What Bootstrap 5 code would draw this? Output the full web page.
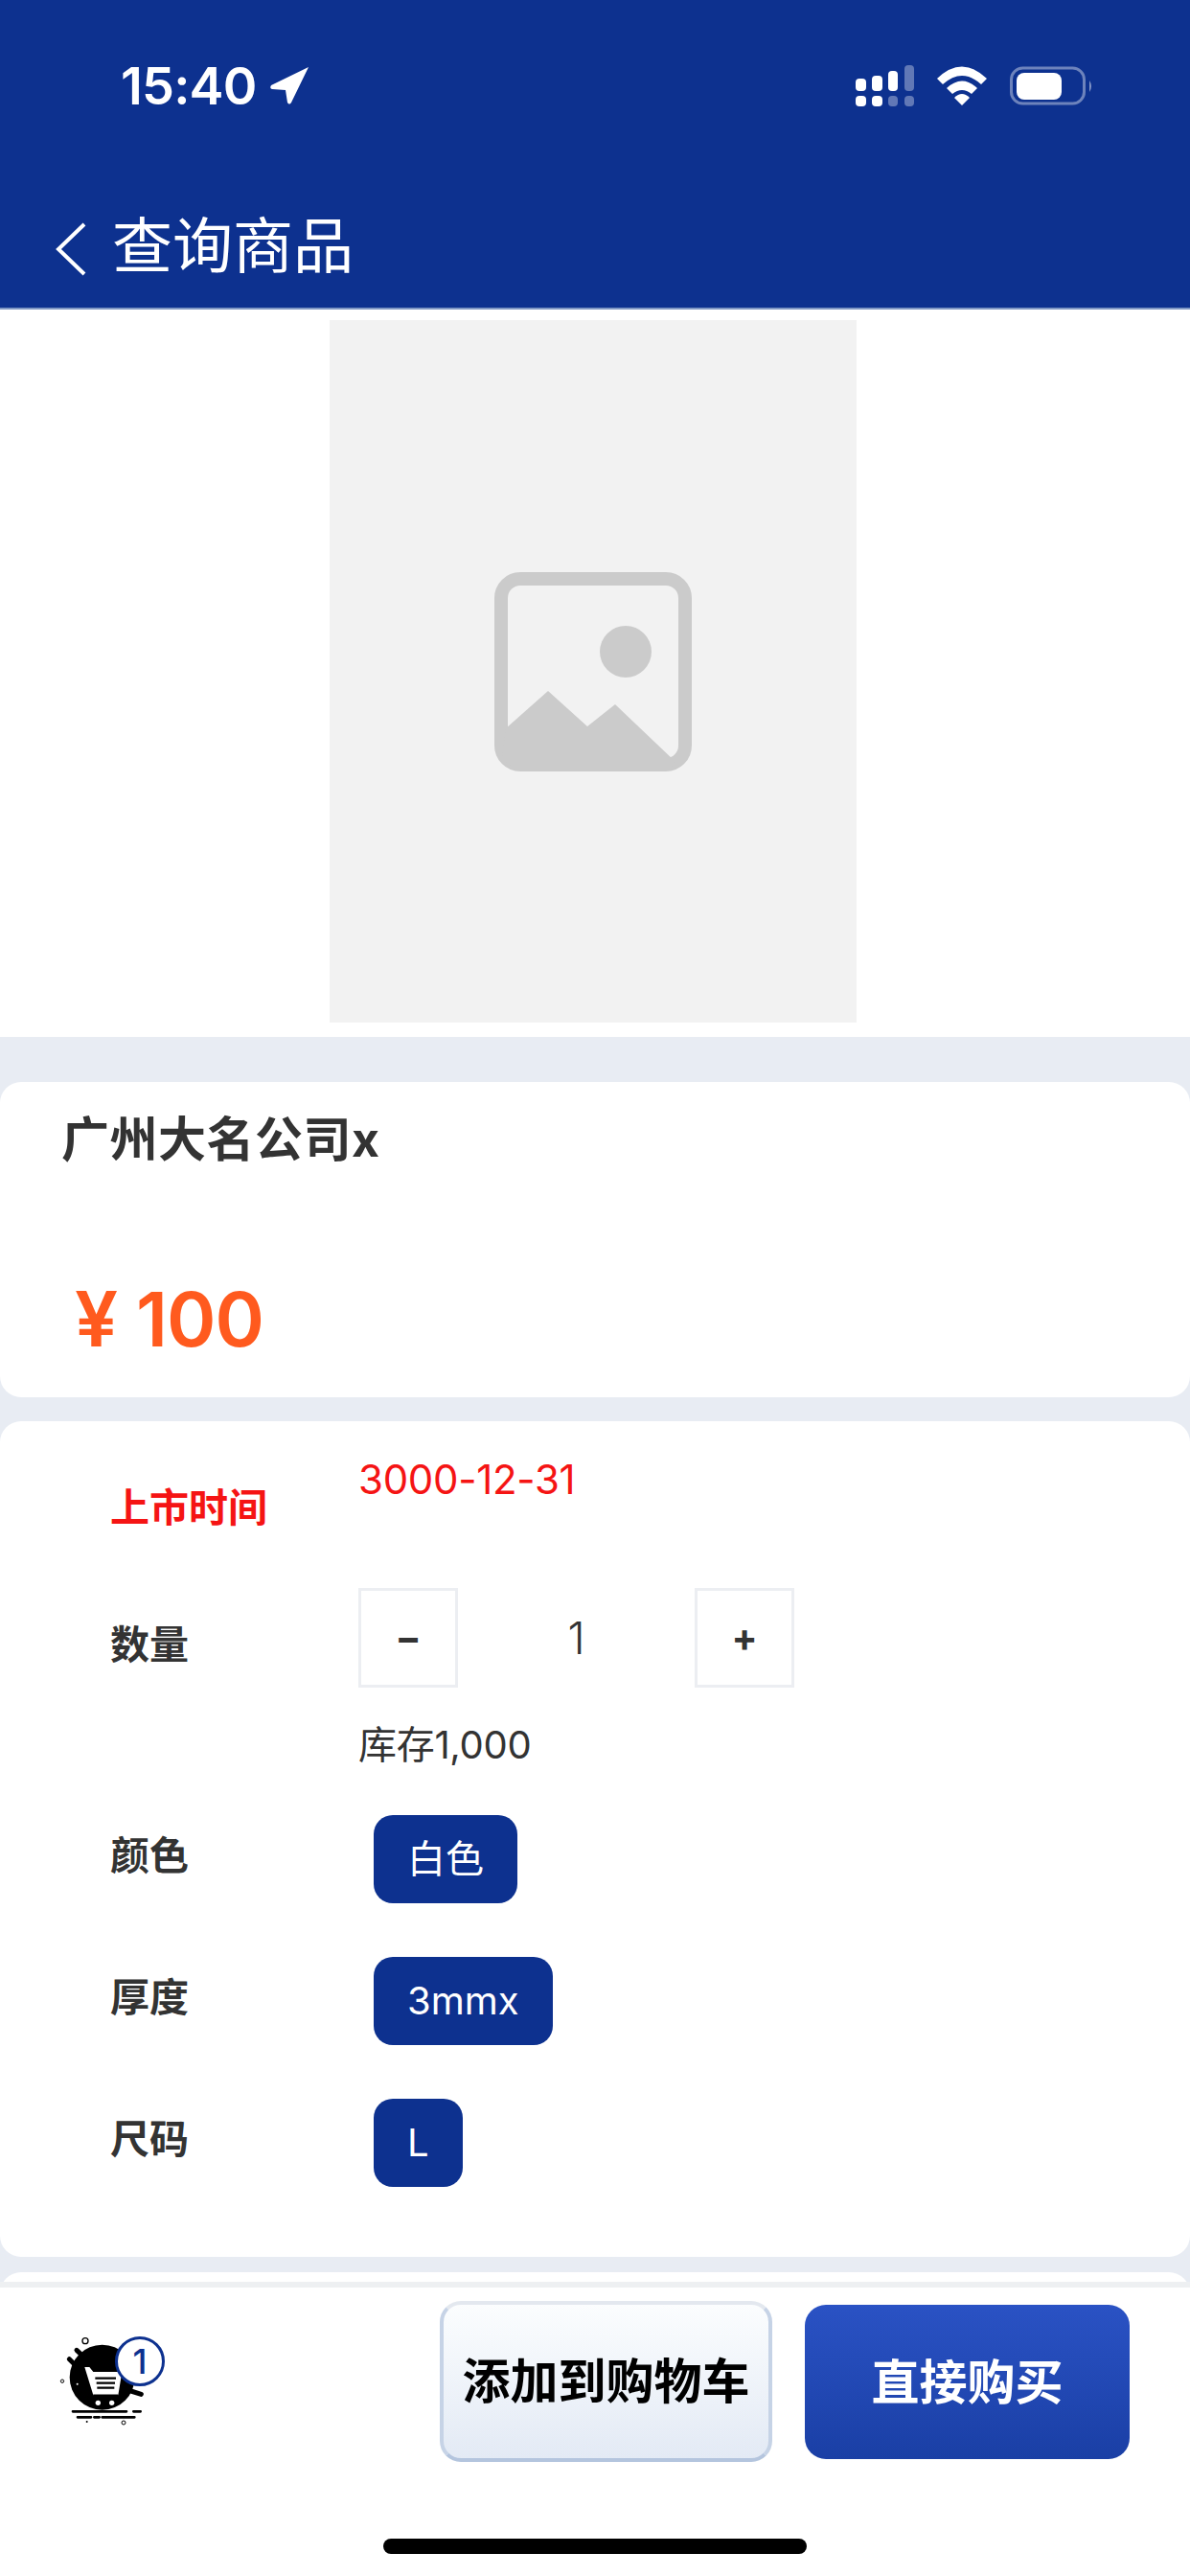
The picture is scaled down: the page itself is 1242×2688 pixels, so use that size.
<!DOCTYPE html>
<html lang="zh-CN">
<head>
<meta charset="utf-8">
<title>查询商品</title>
<link rel="stylesheet" href="https://cdn.jsdelivr.net/npm/bootstrap@5.3.0/dist/css/bootstrap.min.css">
<style>
html,body{margin:0;background:#fff}
body{font-family:Inter,"Noto Sans CJK SC",sans-serif;color:#333;width:1242px;height:2688px;overflow:hidden}
.app-shell{height:2688px}
.app-head{background:#0d318f;height:323px;border-bottom:2px solid #7f97c4;color:#fff}
.status-row{height:197px;padding:62px 0 0 126px}
.clock{font-size:54px;line-height:56px;font-weight:600;letter-spacing:-.8px;width:155px}
.status-icons{margin-left:539px;margin-top:-12px}
.title-row{height:116px;padding-left:57px}
.back-mark{margin-top:10px}
.page-title{font-size:63px;line-height:80px;margin-left:26px;margin-top:2px;font-weight:400}
.scroll-area{background:#e8ecf3;height:2058px;overflow:hidden}
.pic-wrap{background:#fff;height:759px;padding-top:11px}
.pic-box{width:550px;height:733px;background:#f2f2f2;margin-right:4px}
.panel{background:#fff;border-radius:22px}
.panel-title{height:329px;margin-top:47px;padding:30px 0 0 64px}
.goods-name{font-size:50px;line-height:60px;font-weight:700;color:#333;letter-spacing:.5px}
.goods-price{color:#ff5a1e;margin-top:110px;padding-left:14px;line-height:94px;font-weight:600}
.yen{font-size:80px;margin-right:19px}
.amount{font-size:78px;letter-spacing:-1px}
.panel-spec{margin-top:25px;height:872px}
.label-col{width:374px;padding-left:115px;font-size:41px;line-height:50px;font-weight:700;flex:none}
.red-text{color:#f51414}
.date-val{font-size:42px;line-height:50px;margin-top:36px;color:#f51414;letter-spacing:-.3px}
.first-row{height:174px}
.first-row .label-col{margin-top:65px}
.stepper-label{margin-top:34px}
.step-btn{width:104px;height:104px;border:3px solid #eceef2;background:#fff;color:#333;font-size:40px;font-weight:700;padding:0;border-radius:0;line-height:1}
.qty-val{width:247px;text-align:center;font-size:46px;line-height:80px;font-weight:300;color:#333}
.stock-row{padding-left:374px;margin-top:35px;font-size:40px;line-height:50px;font-weight:400;letter-spacing:-.3px}
.opt-row{margin-top:56px}
.opt-row.first-opt{margin-top:48px}
.opt-row .label-col{margin-top:17px}
.chip-btn{margin-left:16px;height:92px;background:#0d318f;color:#fff;border:0;border-radius:20px;font-size:40px;font-weight:400;line-height:92px;padding:0 35px}
.panel-stub{margin-top:16px;height:30px;border-radius:22px 22px 0 0}
.app-foot{height:307px;background:#fff;border-top:6px solid #eef0f2;position:relative}
.cart-wrap{width:160px;height:130px;margin:33px 259px 0 40px;position:relative;flex:none}
.cart-count{position:absolute;left:80px;top:18px;width:52px;height:52px;border:3px solid #0d318f;border-radius:50%;background:#fff;color:#0d318f;font-size:36px;line-height:46px;text-align:center;font-weight:500}
.add-btn{width:347px;height:168px;margin-top:14px;border:4px solid #e3e8ef;border-bottom-color:#b4c5de;border-left-color:#c6d3e6;border-right-color:#c6d3e6;border-radius:22px;background:linear-gradient(#fbfdfe,#e3eaf5);color:#000;font-size:50px;font-weight:700;line-height:1;padding:0}
.buy-btn{width:339px;height:161px;margin:18px 0 0 34px;border:0;border-radius:22px;background:linear-gradient(#2a52c4,#1a3fa5);color:#fff;font-size:50px;font-weight:700;line-height:1;padding:0}
.home-bar{position:absolute;left:400px;top:262px;width:442px;height:16px;border-radius:8px;background:#000}
</style>
</head>
<body>
<div class="app-shell d-flex flex-column">
  <header class="app-head flex-shrink-0">
    <div class="status-row d-flex">
      <div class="clock">15:40</div>
      <svg width="42" height="42" viewBox="0 0 42 42" class="flex-shrink-0" style="margin-top:7px"><path d="M41 1 L2 20 Q0 23 3 24 L17 25 L19 38 Q21 41 23 38 Z" fill="#fff"/></svg>
      <svg class="status-icons flex-shrink-0" width="300" height="80" viewBox="0 0 300 80" fill="#fff">
        <rect x="31" y="32" width="11" height="13" rx="4"/><rect x="48" y="29" width="11" height="16" rx="4"/><rect x="65" y="24" width="10" height="21" rx="4"/><rect x="82" y="18" width="10" height="27" rx="4" opacity=".35"/>
        <rect x="31" y="50" width="11" height="11" rx="4"/><rect x="48" y="50" width="11" height="11" rx="4"/><rect x="65" y="50" width="10" height="11" rx="4" opacity=".35"/><rect x="82" y="50" width="10" height="11" rx="4" opacity=".35"/>
        <path d="M116 32 Q142 7 168 32 L162 38 Q142 20 122 38 Z"/>
        <path d="M126 42 Q142 27 158 42 L152 48 Q142 40 132 48 Z"/>
        <path d="M134 52 Q142 44 150 52 L142 60 Z"/>
        <rect x="193.500" y="21" width="76" height="37" rx="12" fill="none" stroke="#fff" stroke-opacity=".4" stroke-width="3"/>
        <rect x="199" y="26" width="47" height="28" rx="8"/>
        <path d="M275 34 Q279 40 275 46 Z" opacity=".5"/>
      </svg>
    </div>
    <div class="title-row d-flex align-items-center">
      <svg width="34" height="56" viewBox="0 0 34 56" class="flex-shrink-0 back-mark"><path d="M31 2 L4 28 L31 54" fill="none" stroke="#fff" stroke-width="4"/></svg>
      <div class="page-title">查询商品</div>
    </div>
  </header>

  <main class="scroll-area flex-shrink-0">
    <div class="pic-wrap d-flex justify-content-center">
      <div class="pic-box d-flex align-items-center justify-content-center">
        <svg width="206" height="208" viewBox="0 0 206 208">
          <rect x="7" y="7" width="192" height="194" rx="20" fill="none" stroke="#cbcbcb" stroke-width="14"/>
          <circle cx="137" cy="83" r="27" fill="#cbcbcb"/>
          <path d="M12 163 L56 124 L97 161 L126 138 L188 197 L185 204 L20 204 L8 195 Z" fill="#cbcbcb"/>
        </svg>
      </div>
    </div>

    <section class="panel panel-title">
      <div class="goods-name">广州大名公司x</div>
      <div class="goods-price"><span class="yen">¥</span><span class="amount">100</span></div>
    </section>

    <section class="panel panel-spec">
      <div class="first-row d-flex">
        <div class="label-col red-text">上市时间</div>
        <div class="date-val">3000-12-31</div>
      </div>
      <div class="d-flex">
        <div class="label-col stepper-label">数量</div>
        <div class="d-flex align-items-center">
          <button type="button" class="btn step-btn">−</button>
          <div class="qty-val">1</div>
          <button type="button" class="btn step-btn">+</button>
        </div>
      </div>
      <div class="stock-row">库存1,000</div>
      <div class="opt-row first-opt d-flex">
        <div class="label-col">颜色</div>
        <button type="button" class="btn chip-btn">白色</button>
      </div>
      <div class="opt-row d-flex">
        <div class="label-col">厚度</div>
        <button type="button" class="btn chip-btn">3mmx</button>
      </div>
      <div class="opt-row d-flex">
        <div class="label-col">尺码</div>
        <button type="button" class="btn chip-btn">L</button>
      </div>
    </section>
    <div class="panel panel-stub"></div>
  </main>

  <footer class="app-foot d-flex align-items-start flex-shrink-0">
    <div class="cart-wrap">
      <svg width="160" height="130" viewBox="0 0 480 390">
        <circle cx="200" cy="182" r="102"/>
        <path d="M97 125 L135 163 M120 97 L160 135 M290 225 L322 235" stroke="#000" stroke-width="15" stroke-linecap="round"/>
        <path d="M145 150 L160 150 L172 165 L262 165 L250 238 L172 238 Z" fill="#fff"/>
        <path d="M178 185 H243 M182 200 H240 M184 215 H238" stroke="#000" stroke-width="7"/>
        <path d="M172 238 H250" stroke="#000" stroke-width="5"/>
        <circle cx="187" cy="262" r="8" fill="#fff"/><circle cx="230" cy="262" r="8" fill="#fff"/>
        <circle cx="122" cy="203" r="3" fill="#fff"/>
        <path d="M108 289 H276 M298 289 H320 M123 307 H165 M175 307 H191 M200 307 H301" stroke="#000" stroke-width="8" stroke-linecap="round"/>
        <circle cx="147" cy="68" r="9" fill="none" stroke="#000" stroke-width="4"/>
        <circle cx="75" cy="194" r="5" fill="none" stroke="#000" stroke-width="3"/>
        <circle cx="267" cy="324" r="6" fill="none" stroke="#000" stroke-width="3"/>
        <circle cx="152" cy="321" r="3"/>
      </svg>
      <div class="cart-count">1</div>
    </div>
    <button type="button" class="btn add-btn">添加到购物车</button>
    <button type="button" class="btn buy-btn">直接购买</button>
    <div class="home-bar"></div>
  </footer>
</div>
<script src="https://cdn.jsdelivr.net/npm/bootstrap@5.3.0/dist/js/bootstrap.bundle.min.js"></script>
</body>
</html>
